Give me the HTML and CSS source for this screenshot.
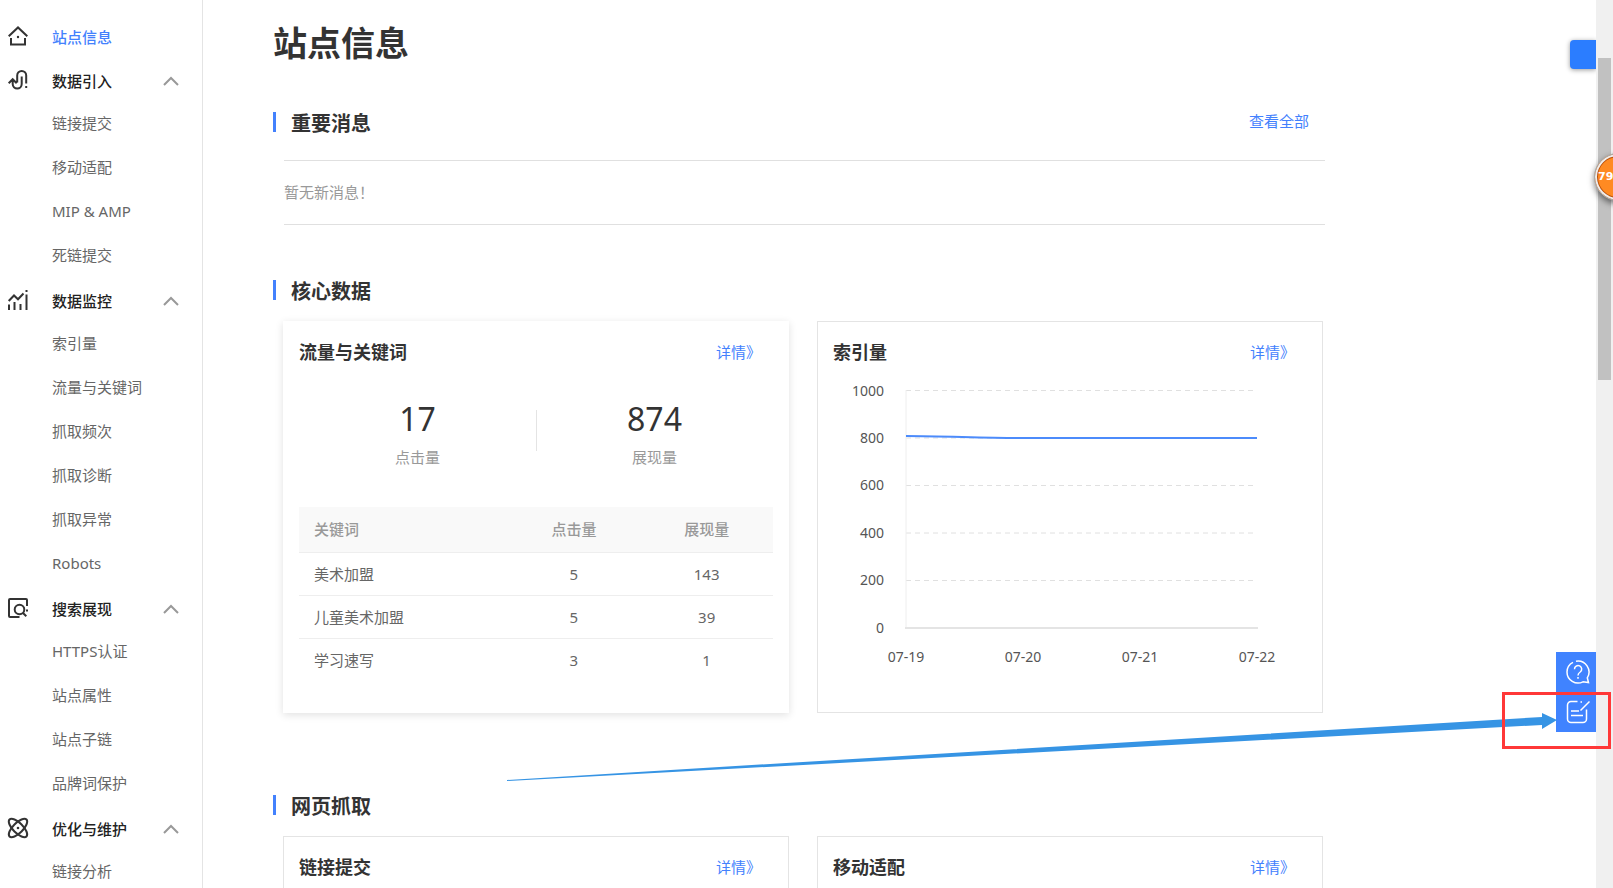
FILE: index.html
```html
<!DOCTYPE html>
<html lang="zh-CN">
  <head>
    <meta charset="UTF-8" />
    <meta name="viewport" content="width=device-width, initial-scale=1.0" />
    <title>站点信息</title>
    <link rel="stylesheet" href="styles.css">
  </head>
  <body>
    <nav class="sidebar">
      <a class="menu-title active" href="#">
        <svg class="menu-icon" viewBox="0 0 20 20">
          <path d="M0.7 10.3 10 1.5l9.3 8.8M3 12v6.500h14V12" />
          <circle class="dot" cx="10" cy="11" r="1.2" />
        </svg>
        <span>站点信息</span>
      </a>

      <button class="menu-title" type="button">
        <svg class="menu-icon" viewBox="0 0 20 20">
          <path d="M0.7 13.2 4.7 9.2l4 4M4.7 10v4a4.5 4.5 0 0 0 9 0V6.5M9.2 12.5V5.5a4.5 4.5 0 0 1 9 0v8M18.2 16v2" />
        </svg>
        <span>数据引入</span>
        <svg class="arrow" viewBox="0 0 16 10"><path d="M1 9l7-7 7 7" /></svg>
      </button>
      <ul class="menu-list">
        <li><a href="#">链接提交</a></li>
        <li><a href="#">移动适配</a></li>
        <li><a href="#">MIP &amp; AMP</a></li>
        <li><a href="#">死链提交</a></li>
      </ul>

      <button class="menu-title" type="button">
        <svg class="menu-icon" viewBox="0 0 20 20">
          <path d="M0.7 11 6 5.5l4 3.8 5.5-5.8M1 14.5V20M6.5 12v8M12.5 14v6M18.5 4.5V20M18.5 0v2" />
        </svg>
        <span>数据监控</span>
        <svg class="arrow" viewBox="0 0 16 10"><path d="M1 9l7-7 7 7" /></svg>
      </button>
      <ul class="menu-list">
        <li><a href="#">索引量</a></li>
        <li><a href="#">流量与关键词</a></li>
        <li><a href="#">抓取频次</a></li>
        <li><a href="#">抓取诊断</a></li>
        <li><a href="#">抓取异常</a></li>
        <li><a href="#">Robots</a></li>
      </ul>

      <button class="menu-title" type="button">
        <svg class="menu-icon" viewBox="0 0 20 20">
          <path d="M11.5 19H2a1 1 0 0 1-1-1V2a1 1 0 0 1 1-1h16a1 1 0 0 1 1 1v6M19 11.5v2M15 15l3.3 3.3" />
          <circle cx="11.5" cy="11.5" r="4.8" />
        </svg>
        <span>搜索展现</span>
        <svg class="arrow" viewBox="0 0 16 10"><path d="M1 9l7-7 7 7" /></svg>
      </button>
      <ul class="menu-list">
        <li><a href="#">HTTPS认证</a></li>
        <li><a href="#">站点属性</a></li>
        <li><a href="#">站点子链</a></li>
        <li><a href="#">品牌词保护</a></li>
      </ul>

      <button class="menu-title" type="button">
        <svg class="menu-icon" viewBox="0 0 20 20">
          <ellipse cx="10" cy="10" rx="12" ry="5" transform="rotate(45 10 10)" />
          <ellipse cx="10" cy="10" rx="12" ry="5" transform="rotate(-45 10 10)" />
          <circle class="dot" cx="10" cy="10" r="1.3" />
        </svg>
        <span>优化与维护</span>
        <svg class="arrow" viewBox="0 0 16 10"><path d="M1 9l7-7 7 7" /></svg>
      </button>
      <ul class="menu-list">
        <li><a href="#">链接分析</a></li>
      </ul>
    </nav>

    <main class="content">
      <h1>站点信息</h1>

      <section class="message">
        <div class="section-head">
          <h2>重要消息</h2>
          <a href="#">查看全部</a>
        </div>
        <p class="message-empty">暂无新消息！</p>
      </section>

      <section class="section">
        <div class="section-head">
          <h2>核心数据</h2>
        </div>
        <div class="cards">
          <div class="card card-hover">
            <div class="card-head">
              <h3>流量与关键词</h3>
              <a href="#">详情》</a>
            </div>
            <div class="stats">
              <div class="stat">
                <strong>17</strong>
                <span>点击量</span>
              </div>
              <div class="stat">
                <strong>874</strong>
                <span>展现量</span>
              </div>
            </div>
            <table class="keywords">
              <thead>
                <tr>
                  <th>关键词</th>
                  <th>点击量</th>
                  <th>展现量</th>
                </tr>
              </thead>
              <tbody>
                <tr>
                  <td>美术加盟</td>
                  <td>5</td>
                  <td>143</td>
                </tr>
                <tr>
                  <td>儿童美术加盟</td>
                  <td>5</td>
                  <td>39</td>
                </tr>
                <tr>
                  <td>学习速写</td>
                  <td>3</td>
                  <td>1</td>
                </tr>
              </tbody>
            </table>
          </div>

          <div class="card">
            <div class="card-head">
              <h3>索引量</h3>
              <a href="#">详情》</a>
            </div>
            <svg class="chart" viewBox="0 0 474 290">
              <g class="grid">
                <path d="M73 6.5H424M73 54H424M73 101.5H424M73 149H424M73 196.5H424M73 244H424" />
              </g>
              <path class="axis-y" d="M73 6V244" />
              <path class="axis-x" d="M72 244H425" />
              <path class="line" d="M73 52C110 52 150 54 190 54H424" />
              <g class="label-y">
                <text x="51" y="12">1000</text>
                <text x="51" y="59">800</text>
                <text x="51" y="106">600</text>
                <text x="51" y="154">400</text>
                <text x="51" y="201">200</text>
                <text x="51" y="249">0</text>
              </g>
              <g class="label-x">
                <text x="73" y="278">07-19</text>
                <text x="190" y="278">07-20</text>
                <text x="307" y="278">07-21</text>
                <text x="424" y="278">07-22</text>
              </g>
            </svg>
          </div>
        </div>
      </section>

      <section class="section">
        <div class="section-head">
          <h2>网页抓取</h2>
        </div>
        <div class="cards">
          <div class="card">
            <div class="card-head">
              <h3>链接提交</h3>
              <a href="#">详情》</a>
            </div>
          </div>
          <div class="card">
            <div class="card-head">
              <h3>移动适配</h3>
              <a href="#">详情》</a>
            </div>
          </div>
        </div>
      </section>
    </main>

    <div class="side-tab"></div>

    <div class="tools">
      <button type="button" aria-label="帮助">
        <svg viewBox="0 0 24 24">
          <path d="M7 2.3A11 11 0 0 0 1 12a11 11 0 0 0 16 9.8l5.5.7-1.200-4.700A11 11 0 0 0 10 1.200" />
          <path d="M8.500 9.200a3.600 3.600 0 1 1 5.700 2.800c-1.500 1-2.200 1.600-2.200 3.500M12 17v1.800" />
        </svg>
      </button>
      <button type="button" aria-label="反馈">
        <svg viewBox="0 0 24 24">
          <path d="M11.5 1.500H5a3.500 3.500 0 0 0-3.500 3.500v14A3.500 3.500 0 0 0 5 22.500h12a3.500 3.500 0 0 0 3.500-3.500V9.500M14.500 2h1.500M23.500 1.500l-9 9M5 11h8M5 15.500h12" />
        </svg>
      </button>
    </div>

    <div class="scrollbar"><div class="thumb"></div></div>
    <div class="speed-ball">79</div>

    <!-- pointer to the feedback button -->
    <svg class="pointer" viewBox="0 0 1050 72">
      <path d="M0 70 1035 7V3l15 7-15 9v-4L0 71z" />
    </svg>
    <div class="mark"></div>
  </body>
</html>
```

FILE: styles.css
```css
* {
  box-sizing: border-box;
}

body {
  display: flex;
  height: 100vh;
  margin: 0;
  overflow: hidden;
  background-color: #fff;
  color: #333;
  font-family: "Noto Sans", "Noto Sans CJK SC", sans-serif;
  font-size: 15px;
  line-height: 20px;
}

h1,
h2,
h3,
p,
ul {
  margin: 0;
  padding: 0;
}

a {
  color: #4381fd;
  text-decoration: none;
}

button {
  border: none;
  background: none;
  font-family: inherit;
  cursor: pointer;
}

/* sidebar */
.sidebar {
  flex: none;
  width: 203px;
  padding-top: 17px;
  border-right: 1px solid #e4e4e4;
}

.menu-title {
  display: flex;
  align-items: center;
  width: 100%;
  height: 40px;
  padding: 0 23px 0 8px;
  color: #222;
  font-size: 15px;
  font-weight: 500;
  line-height: 20px;
}

.menu-title.active {
  margin-bottom: 4px;
  color: #4381fd;
}

.menu-icon {
  width: 20px;
  height: 20px;
  margin: 0 24px 2px 0;
  overflow: visible;
  fill: none;
  stroke: #333;
  stroke-width: 2;
}

.menu-icon .dot {
  fill: #333;
  stroke: none;
}

.arrow {
  width: 16px;
  height: 10px;
  margin-left: auto;
  fill: none;
  stroke: #999;
  stroke-width: 2;
}

.menu-list {
  padding-bottom: 4px;
  list-style: none;
}

.menu-list a {
  display: block;
  padding-left: 52px;
  color: #666;
  line-height: 44px;
}

/* content */
.content {
  flex: 1;
  max-width: 1122px;
  padding: 23px 0 0 70px;
}

h1 {
  margin-bottom: 49px;
  font-size: 34px;
  line-height: 40px;
}

.section-head {
  display: flex;
  justify-content: space-between;
  height: 20px;
  margin-bottom: 21px;
  padding: 0 16px 0 15px;
  border-left: 3px solid #4381fd;
}

.section-head a {
  line-height: 18px;
}

h2 {
  font-size: 20px;
  line-height: 24px;
}

.message .section-head {
  margin-bottom: 28px;
}

.message-empty {
  margin: 0 0 55px 11px;
  border-top: 1px solid #e0e0e0;
  border-bottom: 1px solid #e0e0e0;
  color: #999;
  line-height: 63px;
}

.section {
  margin-bottom: 82px;
}

.cards {
  display: grid;
  grid-template-columns: 1fr 1fr;
  gap: 28px;
  margin: 0 2px 0 10px;
}

.card {
  min-height: 392px;
  padding: 0 15px;
  border: 1px solid #e4e4e4;
}

.card-hover {
  border-color: transparent;
  box-shadow: 0 2px 8px rgba(0, 0, 0, 0.12);
}

.card-head {
  display: flex;
  justify-content: space-between;
  height: 62px;
  padding-right: 12px;
  line-height: 60px;
}

h3 {
  font-size: 18px;
}

.stats {
  display: flex;
  margin-bottom: 39px;
  padding-top: 14px;
}

.stat {
  position: relative;
  flex: 1;
  text-align: center;
}

.stat + .stat::before {
  content: "";
  position: absolute;
  top: 12px;
  left: 0;
  height: 41px;
  border-left: 1px solid #e4e4e4;
}

.stat strong {
  display: block;
  margin-bottom: 8px;
  font-size: 32px;
  font-weight: normal;
  line-height: 42px;
}

.stat span {
  display: block;
  height: 20px;
  color: #999;
  line-height: 18px;
}

.keywords {
  width: 100%;
  border-collapse: collapse;
  table-layout: fixed;
}

.keywords th,
.keywords td {
  width: 28%;
  height: 43px;
  padding: 0;
  border-bottom: 1px solid #eee;
  color: #666;
  text-align: center;
}

.keywords th {
  height: 45px;
  background-color: #f9f9f9;
  color: #999;
  font-weight: 500;
}

.keywords th:first-child,
.keywords td:first-child {
  width: 44%;
  padding-left: 15px;
  text-align: left;
}

.keywords tr:last-child td {
  border-bottom: none;
}

/* chart */
.chart {
  display: block;
  width: 100%;
  overflow: visible;
  fill: none;
}

.grid {
  stroke: #e0e0e0;
  stroke-dasharray: 5 4;
}

.axis-y {
  stroke: #eee;
}

.axis-x {
  stroke: #e4e4e4;
  stroke-width: 2;
}

.line {
  stroke: #4c8bfb;
  stroke-width: 2;
}

.chart text {
  fill: #555;
  font-size: 14px;
}

.label-y {
  text-anchor: end;
}

.label-x {
  text-anchor: middle;
}

/* floating parts on the right edge */
.side-tab {
  position: absolute;
  top: 40px;
  right: 17px;
  width: 26px;
  height: 29px;
  border-radius: 4px 0 0 4px;
  background-color: #2b7dff;
  box-shadow: 0 1px 5px rgba(0, 0, 0, 0.4);
}

.tools {
  position: absolute;
  top: 652px;
  right: 17px;
  width: 40px;
  background-color: #4083ff;
}

.tools button {
  display: block;
  width: 40px;
  height: 40px;
  padding: 8px 6px 8px 10px;
}

.tools svg {
  display: block;
  width: 24px;
  height: 24px;
  fill: none;
  stroke: #fff;
  stroke-width: 1.5;
}

.scrollbar {
  position: absolute;
  top: 0;
  right: 0;
  bottom: 0;
  width: 17px;
  padding: 58px 2px 0;
  background-color: #f0f0f0;
}

.thumb {
  height: 322px;
  background-color: #c1c1c1;
}

.speed-ball {
  position: absolute;
  top: 153px;
  right: -29px;
  width: 48px;
  height: 48px;
  padding-left: 3px;
  border: 1px solid #aaa;
  border-radius: 50%;
  background-color: #ff8a22;
  box-shadow: inset 0 0 0 2px #eee, inset 0 0 0 3px #b9500c, 0 3px 6px rgba(0, 0, 0, 0.5);
  color: #fff;
  font-family: "DejaVu Sans", sans-serif;
  font-size: 11px;
  font-weight: bold;
  line-height: 46px;
}

.pointer {
  position: absolute;
  top: 710px;
  right: 56px;
  width: 1050px;
  height: 72px;
  fill: #3694e4;
  pointer-events: none;
}

.mark {
  position: absolute;
  top: 692px;
  right: 2px;
  width: 109px;
  height: 57px;
  border: 3px solid #ff3838;
  pointer-events: none;
}
```
